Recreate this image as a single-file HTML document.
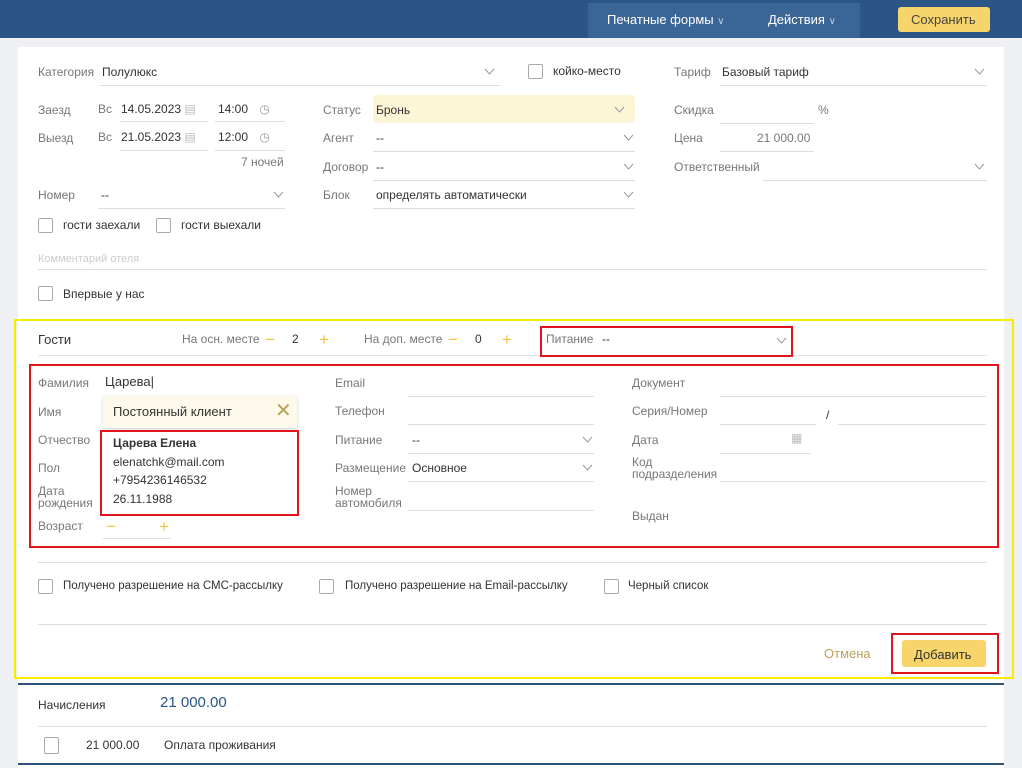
<!DOCTYPE html><html><head><meta charset="utf-8"><style>
body{margin:0;width:1022px;height:768px;background:#eef0f3;font-family:"Liberation Sans",sans-serif;position:relative;overflow:hidden;font-size:12px;color:#333}
.t{position:absolute;white-space:nowrap;line-height:14px}
.g{color:#777}
.l{position:absolute;height:1px;background:#dedede}
.cb{position:absolute;width:13px;height:13px;border:1px solid #aaa;border-radius:2px;background:#fff}
.ch{position:absolute;width:11px;height:7px}
.r{position:absolute;border:2px solid #e0141e;box-sizing:border-box}
.y{color:#f2c53d;font-size:17px;line-height:14px}
</style></head><body>
<div style="position:absolute;left:0;top:0;width:1022px;height:38px;background:#2b5584"></div>
<div style="position:absolute;left:588px;top:3px;width:272px;height:35px;background:#3a6597"></div>
<div class="t" style="left:607px;top:13px;color:#fff;font-size:13px">Печатные формы <span style="font-size:10px;color:#bcd">∨</span></div>
<div class="t" style="left:768px;top:13px;color:#fff;font-size:13px">Действия <span style="font-size:10px;color:#bcd">∨</span></div>
<div style="position:absolute;left:898px;top:7px;width:92px;height:25px;background:#f7d56a;border-radius:3px"></div>
<div class="t" style="left:911px;top:13px;font-size:13px;color:#444">Сохранить</div>
<div style="position:absolute;left:18px;top:47px;width:986px;height:721px;background:#fff"></div>

<div class="t g" style="left:38px;top:65px">Категория</div><div class="t" style="left:102px;top:65px">Полулюкс</div><div class="l" style="left:100px;top:85px;width:400px"></div>
<svg class="ch" style="left:484px;top:68px"><path d="M1 1l4.5 5 4.5-5" fill="none" stroke="#999"/></svg>
<div class="cb" style="left:528px;top:64px"></div><div class="t" style="left:553px;top:64px">койко-место</div>
<div class="t g" style="left:674px;top:65px">Тариф</div><div class="t" style="left:722px;top:65px">Базовый тариф</div><div class="l" style="left:720px;top:85px;width:267px"></div>
<svg class="ch" style="left:974px;top:68px"><path d="M1 1l4.5 5 4.5-5" fill="none" stroke="#999"/></svg>

<div class="t g" style="left:38px;top:103px">Заезд</div><div class="t g" style="left:98px;top:102px">Вс</div><div class="t" style="left:121px;top:102px">14.05.2023 <span style="color:#bbb">▤</span></div><div class="t" style="left:218px;top:102px">14:00 <span style="color:#999;margin-left:8px">◷</span></div>
<div class="l" style="left:120px;top:121px;width:88px"></div><div class="l" style="left:215px;top:121px;width:70px"></div>
<div class="t g" style="left:38px;top:131px">Выезд</div><div class="t g" style="left:98px;top:130px">Вс</div><div class="t" style="left:121px;top:130px">21.05.2023 <span style="color:#bbb">▤</span></div><div class="t" style="left:218px;top:130px">12:00 <span style="color:#999;margin-left:8px">◷</span></div>
<div class="l" style="left:120px;top:150px;width:88px"></div><div class="l" style="left:215px;top:150px;width:70px"></div>
<div class="t g" style="left:241px;top:155px">7 ночей</div>
<div class="t g" style="left:323px;top:103px">Статус</div>
<div style="position:absolute;left:373px;top:95px;width:262px;height:28px;background:#fdf6d6;border-radius:4px"></div>
<div class="t" style="left:376px;top:103px">Бронь</div><svg class="ch" style="left:614px;top:106px"><path d="M1 1l4.5 5 4.5-5" fill="none" stroke="#999"/></svg>
<div class="t g" style="left:323px;top:131px">Агент</div><div class="t" style="left:376px;top:131px">--</div><div class="l" style="left:373px;top:151px;width:262px"></div><svg class="ch" style="left:623px;top:134px"><path d="M1 1l4.5 5 4.5-5" fill="none" stroke="#999"/></svg>
<div class="t g" style="left:323px;top:160px">Договор</div><div class="t" style="left:376px;top:160px">--</div><div class="l" style="left:373px;top:180px;width:262px"></div><svg class="ch" style="left:623px;top:163px"><path d="M1 1l4.5 5 4.5-5" fill="none" stroke="#999"/></svg>
<div class="t g" style="left:323px;top:188px">Блок</div><div class="t" style="left:376px;top:188px">определять автоматически</div><div class="l" style="left:373px;top:208px;width:262px"></div><svg class="ch" style="left:623px;top:191px"><path d="M1 1l4.5 5 4.5-5" fill="none" stroke="#999"/></svg>
<div class="t g" style="left:674px;top:103px">Скидка</div><div class="t g" style="left:818px;top:103px">%</div><div class="l" style="left:720px;top:123px;width:94px"></div>
<div class="t g" style="left:674px;top:131px">Цена</div><div class="t g" style="left:757px;top:131px">21 000.00</div><div class="l" style="left:720px;top:151px;width:94px"></div>
<div class="t g" style="left:674px;top:160px">Ответственный</div><div class="l" style="left:763px;top:180px;width:224px"></div><svg class="ch" style="left:974px;top:163px"><path d="M1 1l4.5 5 4.5-5" fill="none" stroke="#999"/></svg>
<div class="t g" style="left:38px;top:188px">Номер</div><div class="t" style="left:101px;top:188px">--</div><div class="l" style="left:98px;top:208px;width:187px"></div><svg class="ch" style="left:273px;top:191px"><path d="M1 1l4.5 5 4.5-5" fill="none" stroke="#999"/></svg>
<div class="cb" style="left:38px;top:218px"></div><div class="t" style="left:63px;top:218px">гости заехали</div>
<div class="cb" style="left:156px;top:218px"></div><div class="t" style="left:181px;top:218px">гости выехали</div>
<div class="t" style="left:38px;top:252px;color:#ccc;font-size:11px">Комментарий отеля</div><div class="l" style="left:38px;top:269px;width:949px"></div>
<div class="cb" style="left:38px;top:286px"></div><div class="t" style="left:63px;top:287px">Впервые у нас</div>

<div style="position:absolute;left:14px;top:319px;width:1000px;height:360px;border:2px solid #f5ee00;box-sizing:border-box"></div>
<div class="t" style="left:38px;top:333px;font-size:13px">Гости</div><div class="l" style="left:38px;top:355px;width:949px;background:#e4e4e4"></div>
<div class="t g" style="left:182px;top:332px">На осн. месте</div><div class="t y" style="left:265px;top:333px">−</div><div class="t" style="left:292px;top:332px">2</div><div class="t y" style="left:319px;top:333px">+</div>
<div class="t g" style="left:364px;top:332px">На доп. месте</div><div class="t y" style="left:448px;top:333px">−</div><div class="t" style="left:475px;top:332px">0</div><div class="t y" style="left:502px;top:333px">+</div>
<div class="t g" style="left:546px;top:332px">Питание</div><div class="t" style="left:602px;top:332px">--</div><svg class="ch" style="left:776px;top:337px"><path d="M1 1l4.5 5 4.5-5" fill="none" stroke="#999"/></svg>
<div class="r" style="left:540px;top:326px;width:253px;height:31px"></div>
<div class="r" style="left:29px;top:364px;width:970px;height:184px"></div>

<div class="t g" style="left:38px;top:376px">Фамилия</div><div class="t" style="left:105px;top:375px;font-size:13px">Царева|</div>
<div class="t g" style="left:38px;top:405px">Имя</div><div class="t g" style="left:38px;top:433px">Отчество</div><div class="t g" style="left:38px;top:461px">Пол</div>
<div class="t g" style="left:38px;top:485px;line-height:12px">Дата<br>рождения</div><div class="t g" style="left:38px;top:519px">Возраст</div>
<div class="t y" style="left:106px;top:520px">−</div><div class="t y" style="left:159px;top:520px">+</div><div class="l" style="left:103px;top:538px;width:68px"></div>
<div style="position:absolute;left:103px;top:396px;width:194px;height:32px;background:#fdfaeb;box-shadow:0 1px 3px rgba(0,0,0,.2)"></div>
<div class="t" style="left:113px;top:405px;font-size:13px">Постоянный клиент</div><div class="t" style="left:275px;top:404px;font-size:20px;color:#b9a25a">✕</div>
<div style="position:absolute;left:100px;top:430px;width:198px;height:86px;background:#fff"></div>
<div class="r" style="left:100px;top:430px;width:199px;height:86px"></div>
<div class="t" style="left:113px;top:436px;font-weight:bold">Царева Елена</div>
<div class="t" style="left:113px;top:455px">elenatchk@mail.com</div><div class="t" style="left:113px;top:473px">+7954236146532</div><div class="t" style="left:113px;top:492px">26.11.1988</div>

<div class="t g" style="left:335px;top:376px">Email</div><div class="l" style="left:408px;top:396px;width:186px"></div>
<div class="t g" style="left:335px;top:404px">Телефон</div><div class="l" style="left:408px;top:424px;width:186px"></div>
<div class="t g" style="left:335px;top:433px">Питание</div><div class="t" style="left:412px;top:433px">--</div><div class="l" style="left:408px;top:453px;width:186px"></div><svg class="ch" style="left:582px;top:436px"><path d="M1 1l4.5 5 4.5-5" fill="none" stroke="#999"/></svg>
<div class="t g" style="left:335px;top:461px">Размещение</div><div class="t" style="left:412px;top:461px">Основное</div><div class="l" style="left:408px;top:481px;width:186px"></div><svg class="ch" style="left:582px;top:464px"><path d="M1 1l4.5 5 4.5-5" fill="none" stroke="#999"/></svg>
<div class="t g" style="left:335px;top:485px;line-height:12px">Номер<br>автомобиля</div><div class="l" style="left:408px;top:510px;width:186px"></div>

<div class="t g" style="left:632px;top:376px">Документ</div><div class="l" style="left:720px;top:396px;width:266px"></div>
<div class="t g" style="left:632px;top:404px">Серия/Номер</div><div class="l" style="left:720px;top:424px;width:96px"></div><div class="t" style="left:826px;top:408px">/</div><div class="l" style="left:838px;top:424px;width:148px"></div>
<div class="t g" style="left:632px;top:433px">Дата</div><div class="t" style="left:791px;top:431px;color:#bbb">▦</div><div class="l" style="left:720px;top:453px;width:91px"></div>
<div class="t g" style="left:632px;top:456px;line-height:12px">Код<br>подразделения</div><div class="l" style="left:720px;top:481px;width:266px"></div>
<div class="t g" style="left:632px;top:509px">Выдан</div>

<div class="l" style="left:38px;top:562px;width:949px"></div>
<div class="cb" style="left:38px;top:579px"></div><div class="t" style="left:63px;top:579px;font-size:11.5px">Получено разрешение на СМС-рассылку</div>
<div class="cb" style="left:319px;top:579px"></div><div class="t" style="left:345px;top:579px;font-size:11.5px">Получено разрешение на Email-рассылку</div>
<div class="cb" style="left:604px;top:579px"></div><div class="t" style="left:628px;top:579px;font-size:11.5px">Черный список</div>
<div class="l" style="left:38px;top:624px;width:949px"></div>
<div class="t" style="left:824px;top:647px;color:#b9a25a;font-size:13px">Отмена</div>
<div style="position:absolute;left:902px;top:640px;width:84px;height:27px;background:#f7d56a;border-radius:3px"></div>
<div class="t" style="left:914px;top:648px;font-size:13px;color:#333">Добавить</div>
<div class="r" style="left:891px;top:633px;width:108px;height:41px"></div>

<div style="position:absolute;left:18px;top:683px;width:986px;height:2px;background:#2f5479"></div>
<div class="t" style="left:38px;top:698px">Начисления</div><div class="t" style="left:160px;top:696px;font-size:15px;color:#2b5584">21 000.00</div>
<div class="l" style="left:38px;top:726px;width:949px"></div>
<div class="cb" style="left:44px;top:737px;height:15px"></div><div class="t" style="left:86px;top:738px">21 000.00</div><div class="t" style="left:164px;top:738px">Оплата проживания</div>
<div style="position:absolute;left:18px;top:763px;width:986px;height:2px;background:#2f5479"></div>
</body></html>
